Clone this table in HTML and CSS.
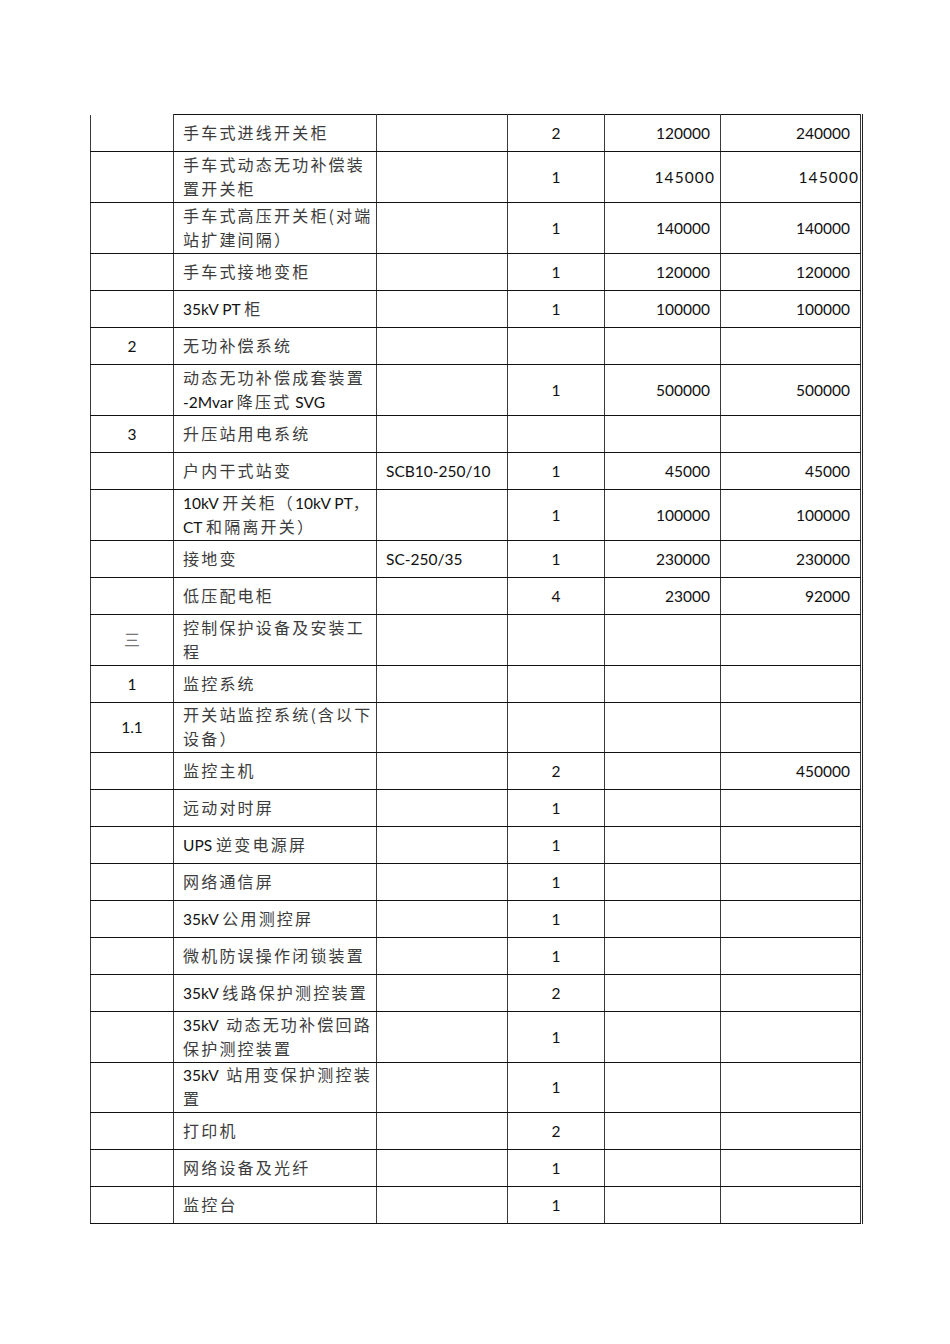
FILE: index.html
```html
<!DOCTYPE html>
<html lang="zh-CN">
<head>
<meta charset="utf-8">
<title>设备清单</title>
<link rel="stylesheet" href="styles.css">
</head>
<body>
<div class="page">
<div class="frame">
<table class="sheet">
<colgroup>
<col class="w1"><col class="w2"><col class="w3"><col class="w4"><col class="w5"><col class="w6">
</colgroup>
<tbody>
<tr><td class="c nt"></td><td class="t"><span class="zh">手车式进线开关柜</span></td><td class="t"></td><td class="c">2</td><td class="n">120000</td><td class="n">240000</td></tr>
<tr><td class="c"></td><td class="t"><span class="zh">手车式动态无功补偿装</span><br><span class="zh">置开关柜</span></td><td class="t"></td><td class="c">1</td><td class="n wide">145000</td><td class="n wide end">145000</td></tr>
<tr><td class="c"></td><td class="t"><span class="zh">手车式高压开关柜</span><span class="zh par">(</span><span class="zh">对端</span><br><span class="zh">站扩建间隔）</span></td><td class="t"></td><td class="c">1</td><td class="n">140000</td><td class="n">140000</td></tr>
<tr><td class="c"></td><td class="t"><span class="zh">手车式接地变柜</span></td><td class="t"></td><td class="c">1</td><td class="n">120000</td><td class="n">120000</td></tr>
<tr><td class="c"></td><td class="t">35kV PT <span class="zh">柜</span></td><td class="t"></td><td class="c">1</td><td class="n">100000</td><td class="n">100000</td></tr>
<tr><td class="c">2</td><td class="t"><span class="zh">无功补偿系统</span></td><td class="t"></td><td class="c"></td><td class="n"></td><td class="n"></td></tr>
<tr><td class="c"></td><td class="t"><span class="zh">动态无功补偿成套装置</span><br>-2Mvar <span class="zh">降压式</span> SVG</td><td class="t"></td><td class="c">1</td><td class="n">500000</td><td class="n">500000</td></tr>
<tr><td class="c">3</td><td class="t"><span class="zh">升压站用电系统</span></td><td class="t"></td><td class="c"></td><td class="n"></td><td class="n"></td></tr>
<tr><td class="c"></td><td class="t"><span class="zh">户内干式站变</span></td><td class="t">SCB10-250/10</td><td class="c">1</td><td class="n">45000</td><td class="n">45000</td></tr>
<tr><td class="c"></td><td class="t">10kV <span class="zh">开关柜（</span>10kV PT<span class="zh">，</span><br>CT <span class="zh">和隔离开关）</span></td><td class="t"></td><td class="c">1</td><td class="n">100000</td><td class="n">100000</td></tr>
<tr><td class="c"></td><td class="t"><span class="zh">接地变</span></td><td class="t">SC-250/35</td><td class="c">1</td><td class="n">230000</td><td class="n">230000</td></tr>
<tr><td class="c"></td><td class="t"><span class="zh">低压配电柜</span></td><td class="t"></td><td class="c">4</td><td class="n">23000</td><td class="n">92000</td></tr>
<tr><td class="c"><span class="zh light">三</span></td><td class="t"><span class="zh">控制保护设备及安装工</span><br><span class="zh">程</span></td><td class="t"></td><td class="c"></td><td class="n"></td><td class="n"></td></tr>
<tr><td class="c">1</td><td class="t"><span class="zh">监控系统</span></td><td class="t"></td><td class="c"></td><td class="n"></td><td class="n"></td></tr>
<tr class="d"><td class="c">1.1</td><td class="t"><span class="zh">开关站监控系统</span><span class="zh par">(</span><span class="zh">含以下</span><br><span class="zh">设备）</span></td><td class="t"></td><td class="c"></td><td class="n"></td><td class="n"></td></tr>
<tr><td class="c"></td><td class="t"><span class="zh">监控主机</span></td><td class="t"></td><td class="c">2</td><td class="n"></td><td class="n">450000</td></tr>
<tr><td class="c"></td><td class="t"><span class="zh">远动对时屏</span></td><td class="t"></td><td class="c">1</td><td class="n"></td><td class="n"></td></tr>
<tr><td class="c"></td><td class="t">UPS <span class="zh">逆变电源屏</span></td><td class="t"></td><td class="c">1</td><td class="n"></td><td class="n"></td></tr>
<tr><td class="c"></td><td class="t"><span class="zh">网络通信屏</span></td><td class="t"></td><td class="c">1</td><td class="n"></td><td class="n"></td></tr>
<tr><td class="c"></td><td class="t">35kV <span class="zh">公用测控屏</span></td><td class="t"></td><td class="c">1</td><td class="n"></td><td class="n"></td></tr>
<tr><td class="c"></td><td class="t"><span class="zh">微机防误操作闭锁装置</span></td><td class="t"></td><td class="c">1</td><td class="n"></td><td class="n"></td></tr>
<tr><td class="c"></td><td class="t">35kV <span class="zh">线路保护测控装置</span></td><td class="t"></td><td class="c">2</td><td class="n"></td><td class="n"></td></tr>
<tr><td class="c"></td><td class="t">35kV&nbsp; <span class="zh">动态无功补偿回路</span><br><span class="zh">保护测控装置</span></td><td class="t"></td><td class="c">1</td><td class="n"></td><td class="n"></td></tr>
<tr class="d"><td class="c"></td><td class="t">35kV&nbsp; <span class="zh">站用变保护测控装</span><br><span class="zh">置</span></td><td class="t"></td><td class="c">1</td><td class="n"></td><td class="n"></td></tr>
<tr><td class="c"></td><td class="t"><span class="zh">打印机</span></td><td class="t"></td><td class="c">2</td><td class="n"></td><td class="n"></td></tr>
<tr><td class="c"></td><td class="t"><span class="zh">网络设备及光纤</span></td><td class="t"></td><td class="c">1</td><td class="n"></td><td class="n"></td></tr>
<tr><td class="c"></td><td class="t"><span class="zh">监控台</span></td><td class="t"></td><td class="c">1</td><td class="n"></td><td class="n"></td></tr>
</tbody>
</table>
</div>
</div>
</body>
</html>
```

FILE: styles.css
```css
html, body {
  margin: 0;
  padding: 0;
  background: #ffffff;
}

.page {
  padding: 114px 0 0 90px;
}

.frame {
  display: inline-block;
  border-right: 1px solid #222;
  padding-right: 1px;
}

.sheet {
  border-collapse: collapse;
  table-layout: fixed;
  width: 770px;
  font-family: "Lato", "Noto Sans CJK SC", sans-serif;
  font-size: 15.5px;
  color: #111;
}

.w1 { width: 83px; }
.w2 { width: 203px; }
.w3 { width: 131px; }
.w4 { width: 97px; }
.w5 { width: 116px; }
.w6 { width: 140px; }

.sheet td {
  border-top: 1px solid #111;
  border-bottom: 1px solid #111;
  border-left: 1px solid #3a3a3a;
  border-right: 1px solid #3a3a3a;
  height: 34px;
  padding: 1px 9px;
  line-height: 24px;
  white-space: nowrap;
  vertical-align: middle;
  overflow: hidden;
}

.sheet tr.d td {
  padding-top: 0;
  padding-bottom: 1px;
}

.sheet td.nt {
  border-top: none;
}

.sheet td.c { text-align: center; }
.sheet td.t { text-align: left; }
.sheet td.n { text-align: right; padding-right: 10px; }
.sheet td.n.wide { letter-spacing: 1.1px; padding-right: 5px; }
.sheet td.n.wide.end { padding-right: 1px; }

.zh {
  font-family: "Noto Sans CJK SC", sans-serif;
  font-size: 16px;
  line-height: 16px;
  letter-spacing: 2.2px;
  color: #3c3c3c;
}

.zh.par {
  letter-spacing: 0;
  margin-right: 2px;
}

.zh.light {
  color: #777;
  letter-spacing: 0;
}
```
